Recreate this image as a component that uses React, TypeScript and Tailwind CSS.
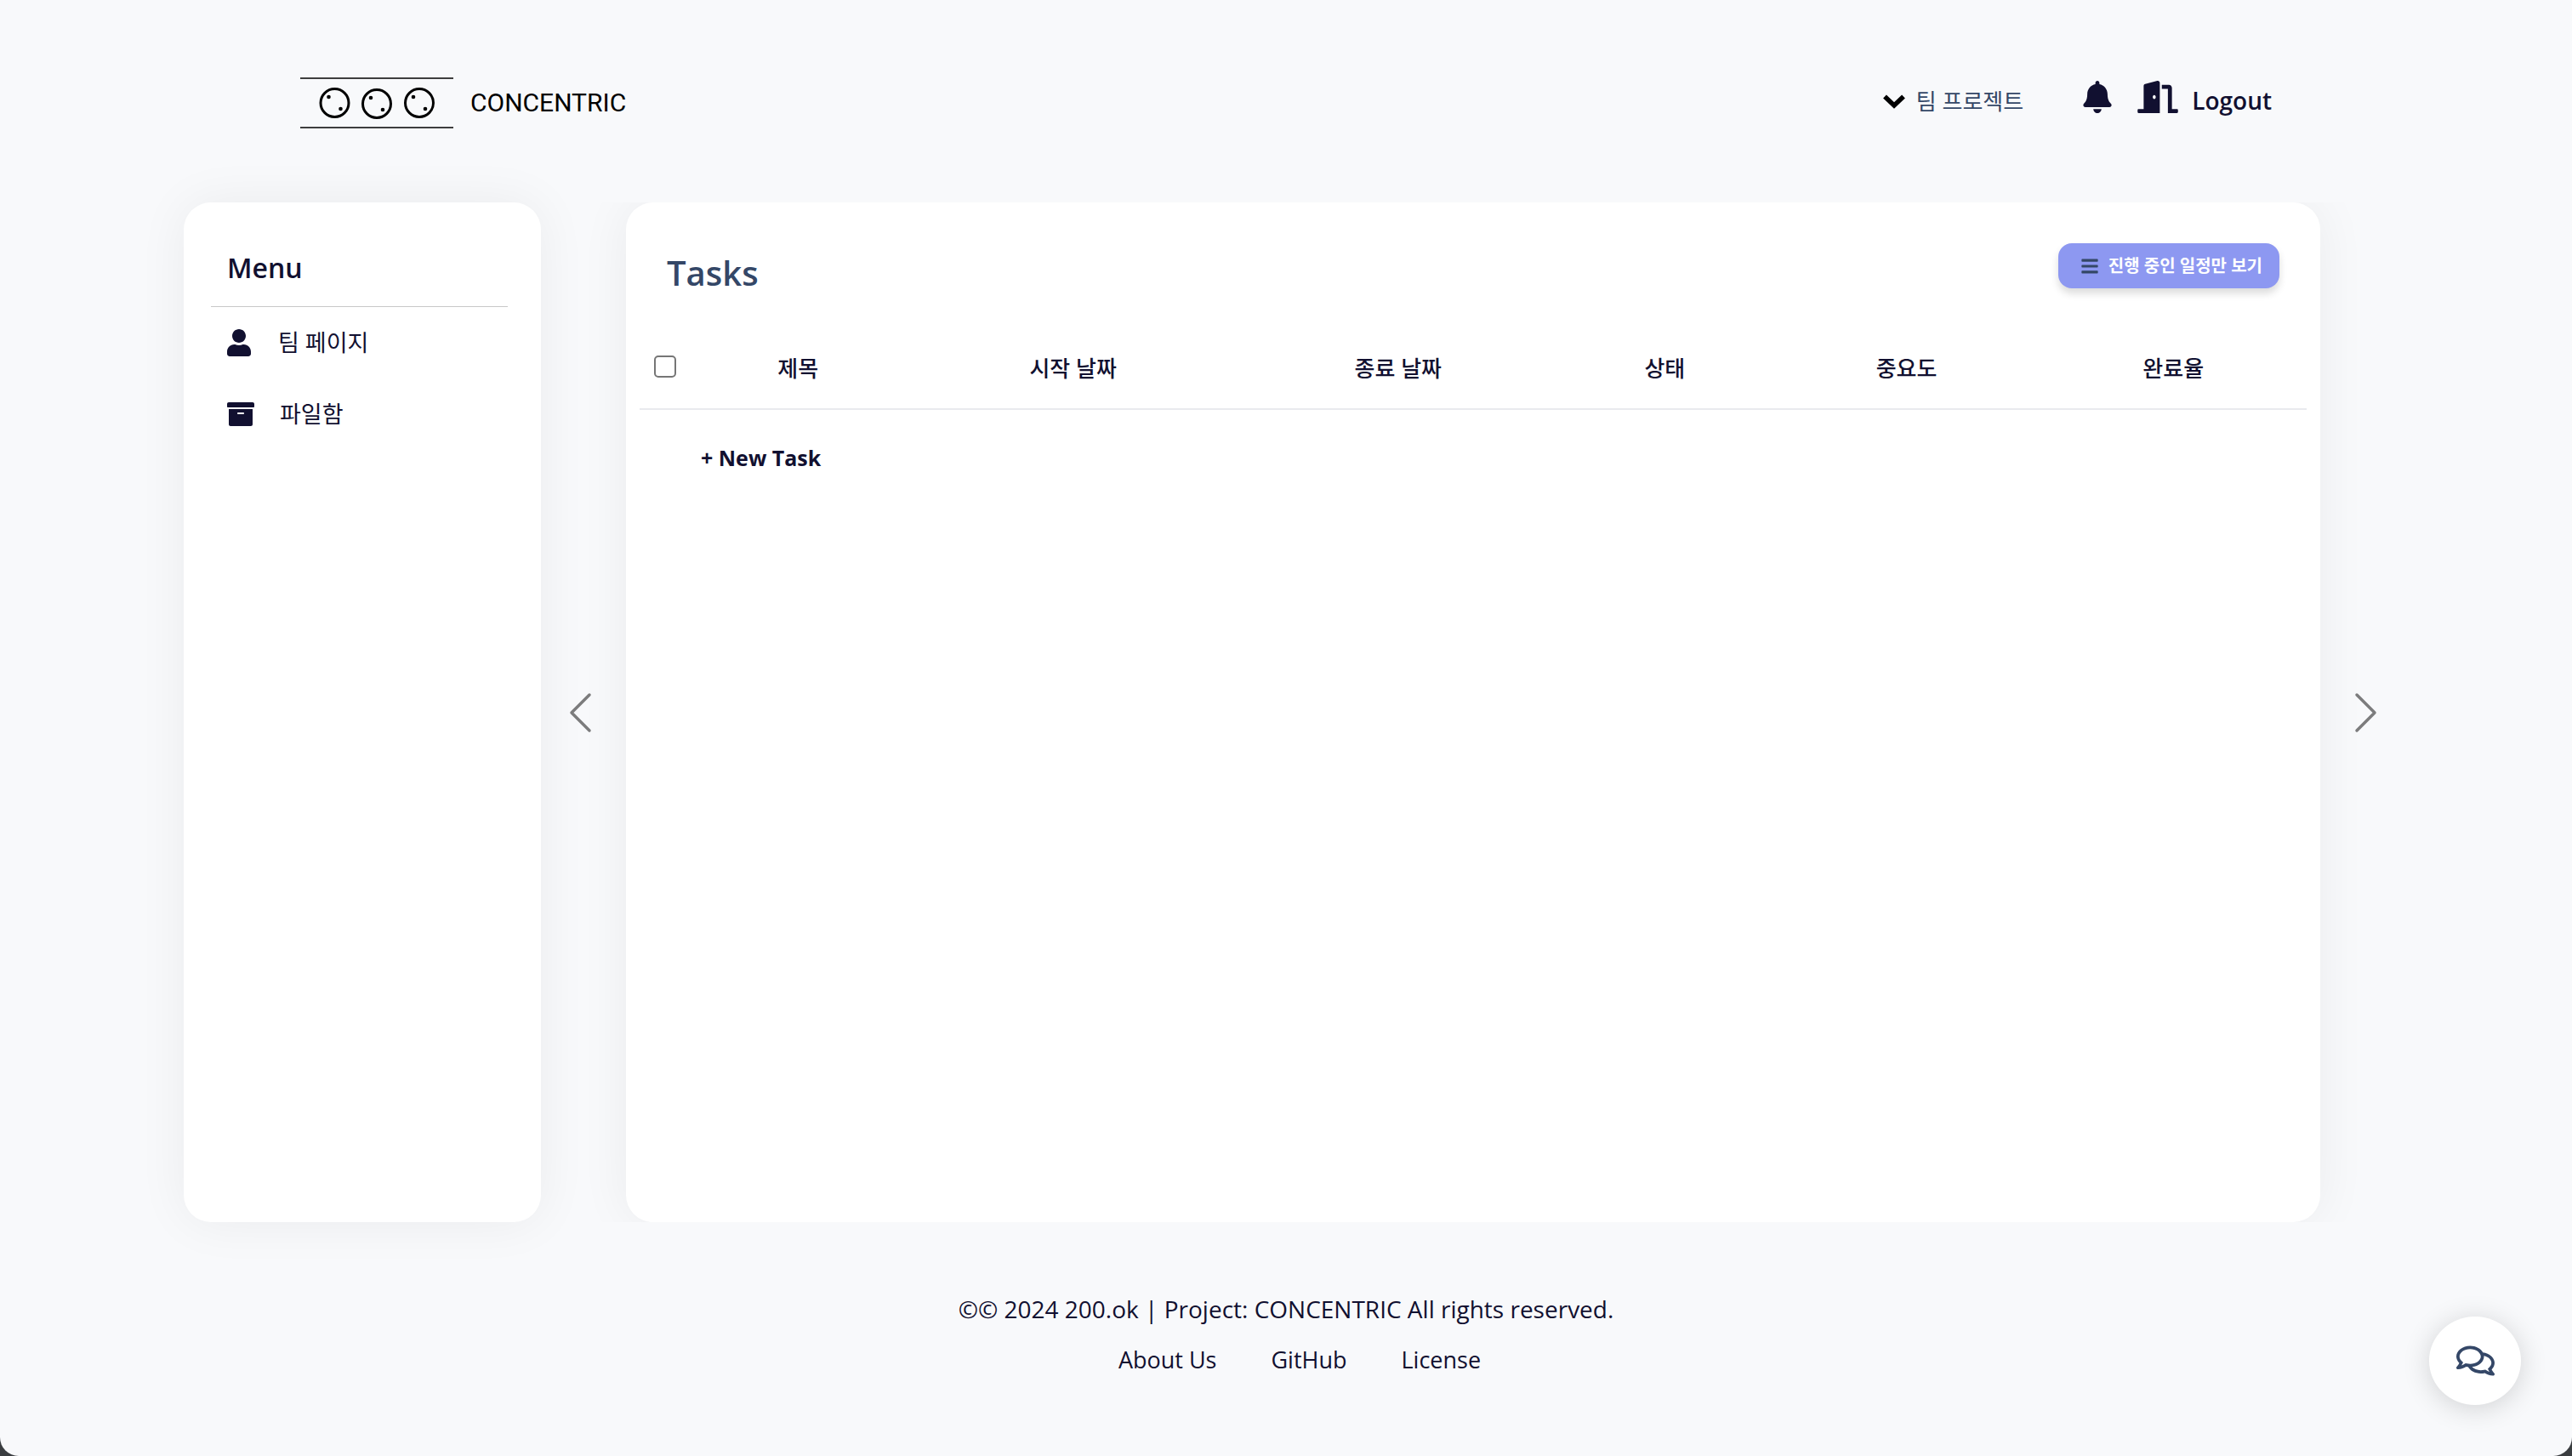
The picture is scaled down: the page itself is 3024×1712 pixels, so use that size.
import React from "react";
import { FaArchive, FaBars, FaBell, FaDoorOpen, FaRegComments, FaUser } from "react-icons/fa";

const columns = [
  { label: "제목", width: "w-[13%]" },
  { label: "시작 날짜", width: "w-[20%]" },
  { label: "종료 날짜", width: "w-[19%]" },
  { label: "상태", width: "w-[13%]" },
  { label: "중요도", width: "w-[16%]" },
  { label: "완료율", width: "w-[16%]" },
];

const footerLinks = ["About Us", "GitHub", "License"];

function Logo() {
  return (
    <a href="#" className="flex items-center gap-5 text-black">
      <svg width="180" height="60" viewBox="0 0 180 60" fill="none" aria-hidden="true">
        <path d="M0 1H180M0 59H180" stroke="currentColor" strokeWidth="1.5" />
        {[
          [40.5, 30],
          [90, 31],
          [140, 30],
        ].map(([x, y]) => (
          <g key={x}>
            <circle cx={x} cy={y} r="16.5" stroke="currentColor" strokeWidth="3" />
            <circle cx={x - 7} cy={y - 7} r="2.3" fill="currentColor" />
            <circle cx={x + 7} cy={y + 7} r="2.3" fill="currentColor" />
          </g>
        ))}
      </svg>
      <span className="font-['Roboto',sans-serif] text-[30px] leading-10">CONCENTRIC</span>
    </a>
  );
}

function Header() {
  return (
    <header className="flex h-[238px] items-start justify-between pl-[353px] pr-[353px] pt-[91px]">
      <Logo />
      <nav className="flex items-start">
        <button type="button" className="flex h-14 items-center gap-3 text-[26px] text-[#344767]">
          <svg width="28" height="20" viewBox="0 0 28 20" fill="none" aria-hidden="true">
            <path d="M3 4.5L14 15L25 4.5" stroke="#000" strokeWidth="5.5" />
          </svg>
          팀 프로젝트
        </button>
        <button type="button" aria-label="알림" className="ml-[70px] pt-1">
          <FaBell className="h-[38px] w-[34px]" />
        </button>
        <a href="#" className="ml-[30px] flex items-start gap-4 text-[28px] font-semibold leading-[54px]">
          <FaDoorOpen className="mt-1 h-[38px] w-12" />
          Logout
        </a>
      </nav>
    </header>
  );
}

function Sidebar() {
  return (
    <aside className="w-[420px] shrink-0 rounded-[32px] bg-white pl-8 pr-[39px] pt-[52px] shadow-[0_0_60px_rgba(0,0,0,0.06)]">
      <h2 className="border-b border-[#c8c8c8] pb-5 pl-[19px] text-[32px] font-semibold leading-[50px]">Menu</h2>
      <ul className="text-[27px]">
        <li className="flex h-[84px] items-center pl-[19px]">
          <a href="#" className="flex items-center gap-8">
            <FaUser className="h-8 w-7" />
            팀 페이지
          </a>
        </li>
        <li className="flex h-[84px] items-center pl-[19px]">
          <a href="#" className="flex items-center gap-[30px]">
            <FaArchive className="size-8" />
            파일함
          </a>
        </li>
      </ul>
    </aside>
  );
}

function ArrowButton({ label, path, side }: { label: string; path: string; side: string }) {
  return (
    <button type="button" aria-label={label} className={`flex w-[100px] shrink-0 items-center justify-center ${side}`}>
      <svg width="28" height="48" viewBox="0 0 28 48" fill="none" aria-hidden="true">
        <path d={path} stroke="#7c7c7d" strokeWidth="3.5" strokeLinecap="round" strokeLinejoin="round" />
      </svg>
    </button>
  );
}

function Tasks() {
  return (
    <section className="min-w-0 flex-1 rounded-[32px] bg-white px-4 shadow-[0_0_60px_rgba(0,0,0,0.06)] [clip-path:inset(0_-100px)]">
      <div className="flex items-start justify-between pl-8 pr-8 pt-12">
        <h1 className="pt-1 text-[40px] font-semibold leading-[62px] text-[#344767]">Tasks</h1>
        <button
          type="button"
          className="flex h-[53px] items-center gap-3 rounded-2xl bg-[#8d98f1] pl-[27px] pr-5 text-[20px] font-bold text-white shadow-[0_6px_10px_rgba(0,0,0,0.14)]"
        >
          <FaBars className="h-[22px] w-5 text-[#344767]" />
          진행 중인 일정만 보기
        </button>
      </div>
      <table className="mt-[35px] w-full table-fixed text-[26px]">
        <thead>
          <tr className="h-[94px] border-b-2 border-[#e9eaee]">
            <th className="w-[3%] pb-1.5 pl-[17px] text-left">
              <input
                type="checkbox"
                aria-label="모두 선택"
                className="block size-[26px] appearance-none rounded-[5px] border-2 border-[#767676] bg-white checked:bg-[#767676]"
              />
            </th>
            {columns.map((column) => (
              <th key={column.label} className={`${column.width} text-center font-medium`}>
                {column.label}
              </th>
            ))}
          </tr>
        </thead>
        <tbody>
          <tr>
            <td colSpan={7} className="h-[114px] pl-[72px]">
              <button type="button" className="text-[25px] font-bold">
                + New Task
              </button>
            </td>
          </tr>
        </tbody>
      </table>
    </section>
  );
}

function Footer() {
  return (
    <footer className="flex h-[275px] flex-col items-center pt-[73px] text-[28px] leading-[59px]">
      <p>©© 2024 200.ok | Project: CONCENTRIC All rights reserved.</p>
      <nav className="flex gap-16 pl-8 text-[27px]">
        {footerLinks.map((link) => (
          <a key={link} href="#">
            {link}
          </a>
        ))}
      </nav>
    </footer>
  );
}

export default function App() {
  return (
    <div className="min-h-screen bg-[#3a3d40] font-['Open_Sans','Noto_Sans_CJK_KR',sans-serif] text-[#111030]">
      <div className="flex min-h-screen flex-col rounded-b-[22px] bg-[#f8f9fb]">
        <Header />
        <main className="flex flex-1 pl-[216px] pr-[196px]">
          <Sidebar />
          <ArrowButton label="이전" path="M24 3L3 24L24 45" side="pr-1.5" />
          <Tasks />
          <ArrowButton label="다음" path="M4 3L25 24L4 45" side="pl-1.5" />
        </main>
        <Footer />
      </div>
      <button
        type="button"
        aria-label="채팅"
        className="fixed bottom-[60px] right-[60px] flex h-[104px] w-[108px] items-center justify-center rounded-[50%] bg-white text-[#344767] shadow-[0_4px_32px_rgba(0,0,0,0.16)]"
      >
        <FaRegComments className="h-10 w-[45px]" />
      </button>
    </div>
  );
}
